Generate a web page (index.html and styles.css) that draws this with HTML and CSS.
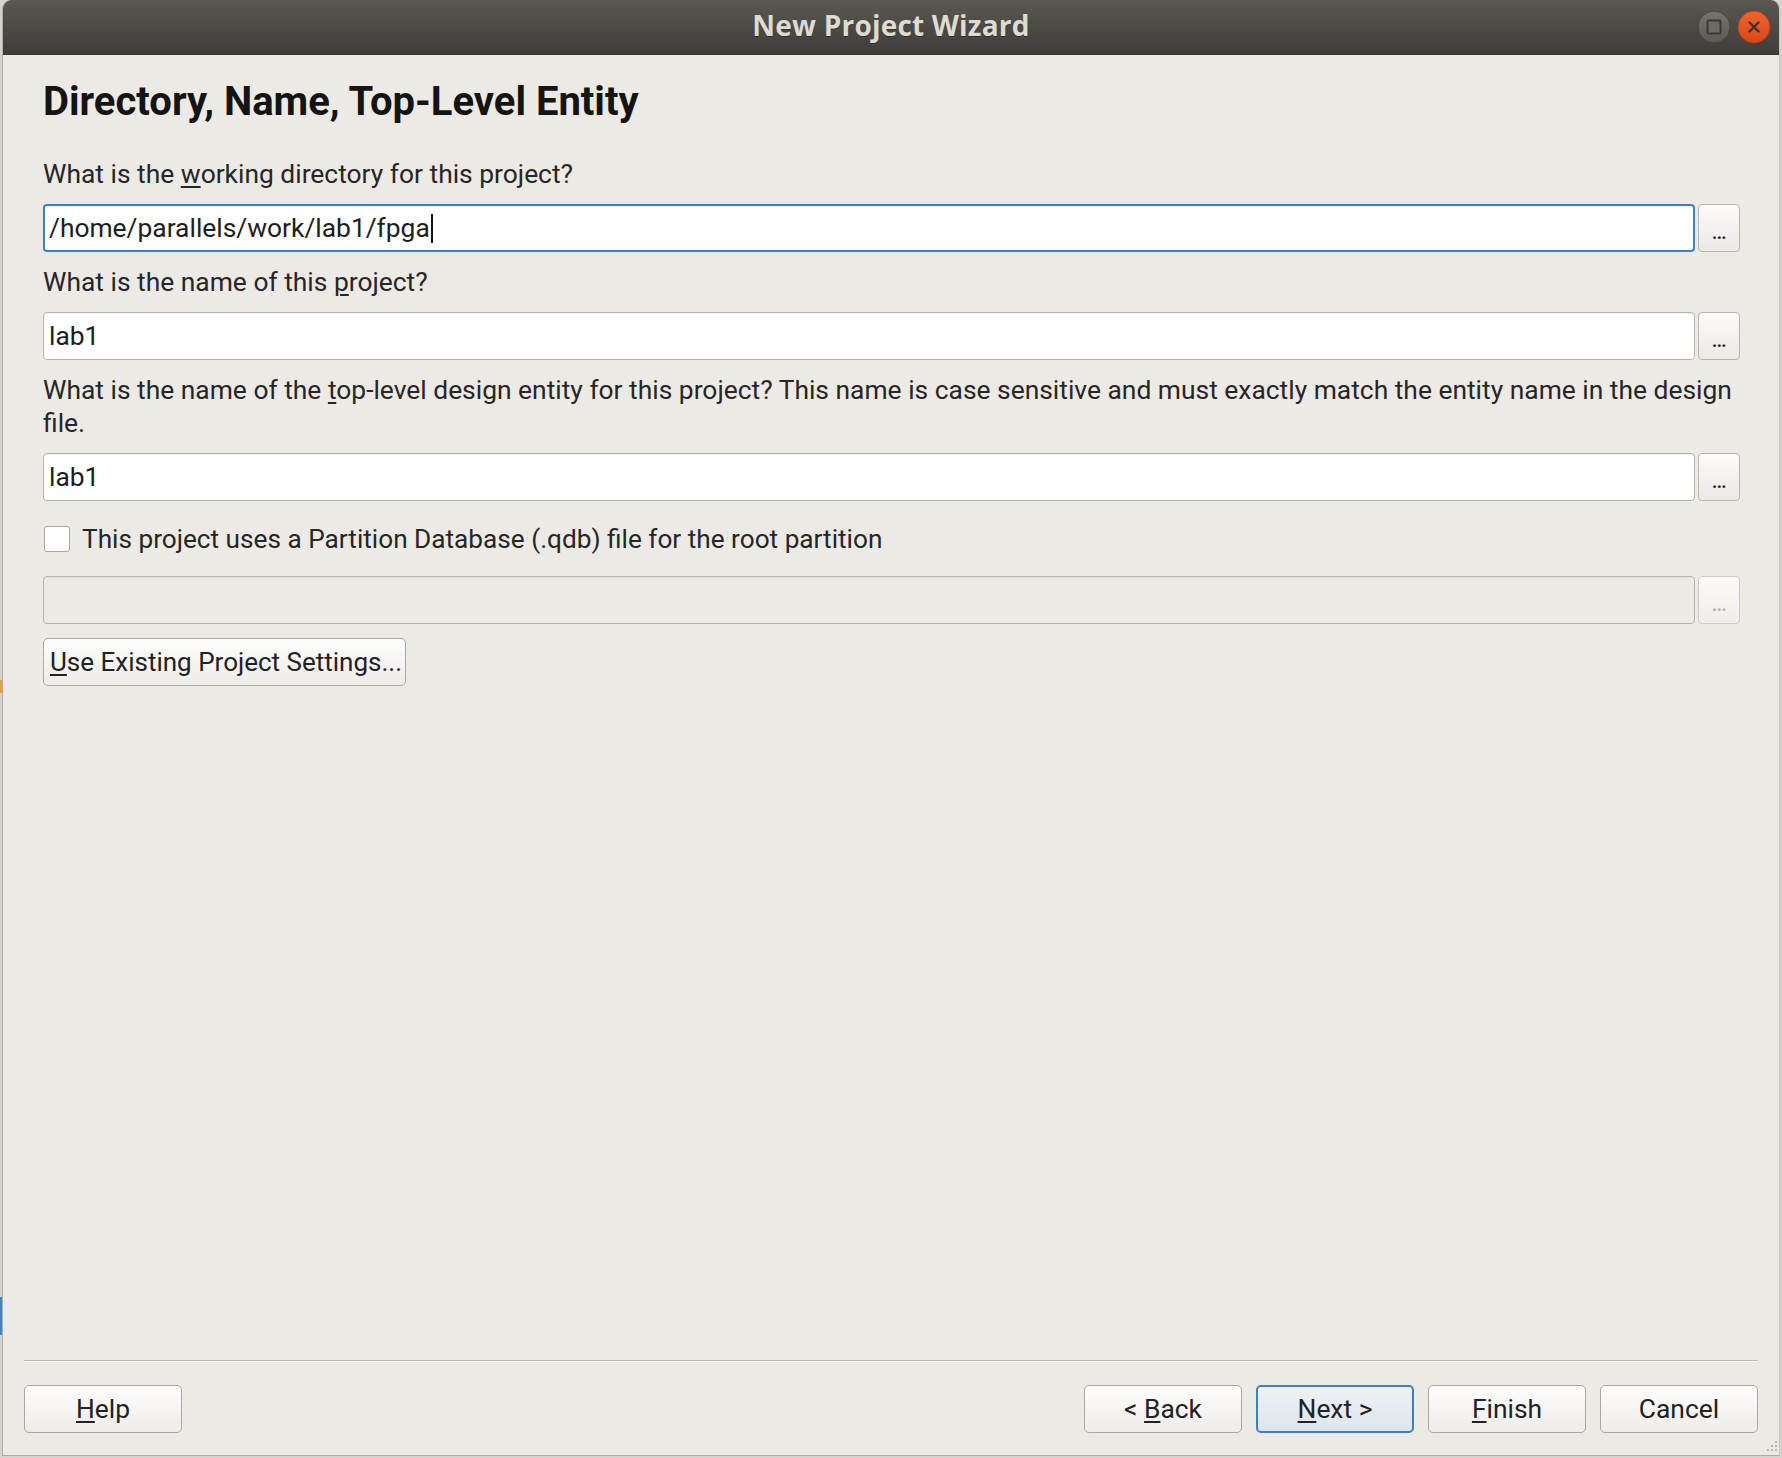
FILE: index.html
```html
<!DOCTYPE html>
<html lang="en">
<head>
<meta charset="utf-8">
<title>New Project Wizard</title>
<link rel="stylesheet" href="styles.css">
</head>
<body>
<div class="screen">
  <div class="edge">
    <div class="edge-seg seg-a"></div>
    <div class="edge-seg seg-orange"></div>
    <div class="edge-seg seg-b"></div>
    <div class="edge-seg seg-blue"></div>
    <div class="edge-seg seg-c"></div>
  </div>
  <div class="window">
    <div class="titlebar">
      <div class="title">New Project Wizard</div>
      <div class="wm-buttons">
        <svg class="wm" width="34" height="34" viewBox="0 0 34 34">
          <defs>
            <linearGradient id="gmax" x1="0" y1="0" x2="0" y2="1">
              <stop offset="0" stop-color="#77746f"/>
              <stop offset="1" stop-color="#5d5a55"/>
            </linearGradient>
          </defs>
          <circle cx="17" cy="17" r="16" fill="url(#gmax)" stroke="#45433f" stroke-width="1"/>
          <rect x="10.5" y="10.5" width="13" height="13" rx="1" fill="#6d6a65" stroke="#393834" stroke-width="2"/>
        </svg>
        <svg class="wm" width="34" height="34" viewBox="0 0 34 34">
          <defs>
            <linearGradient id="gclose" x1="0" y1="0" x2="0" y2="1">
              <stop offset="0" stop-color="#f0642f"/>
              <stop offset="1" stop-color="#d8461b"/>
            </linearGradient>
          </defs>
          <circle cx="17" cy="17" r="16" fill="url(#gclose)" stroke="#b03e16" stroke-width="1"/>
          <path d="M12.5 12.5 L21.5 21.5 M21.5 12.5 L12.5 21.5" stroke="#3a2f2a" stroke-width="2.3" stroke-linecap="round"/>
        </svg>
      </div>
    </div>

    <div class="body">
      <div class="content">
        <h1 class="heading">Directory, Name, Top-Level Entity</h1>

        <div class="label">What is the <u>w</u>orking directory for this project?</div>
        <div class="row">
          <div class="input focused">/home/parallels/work/lab1/fpga<span class="caret"></span></div>
          <button class="browse">...</button>
        </div>

        <div class="label">What is the name of this <u>p</u>roject?</div>
        <div class="row">
          <div class="input">lab1</div>
          <button class="browse">...</button>
        </div>

        <div class="label">What is the name of the <u>t</u>op-level design entity for this project? This name is case sensitive and must exactly match the entity name in the design file.</div>
        <div class="row">
          <div class="input">lab1</div>
          <button class="browse">...</button>
        </div>

        <div class="check-row">
          <span class="checkbox"></span>
          <span class="check-label">This project uses a Partition Database (.qdb) file for the root partition</span>
        </div>

        <div class="row">
          <div class="input disabled"></div>
          <button class="browse disabled">...</button>
        </div>

        <div class="row-left">
          <button class="btn btn-auto"><u>U</u>se Existing Project Settings...</button>
        </div>
      </div>

      <div class="footer">
        <div class="separator"></div>
        <div class="button-bar">
          <button class="btn"><u>H</u>elp</button>
          <div class="button-group">
            <button class="btn">&lt; <u>B</u>ack</button>
            <button class="btn btn-default"><u>N</u>ext &gt;</button>
            <button class="btn"><u>F</u>inish</button>
            <button class="btn">Cancel</button>
          </div>
        </div>
      </div>

      <svg class="grip" width="14" height="14" viewBox="0 0 14 14">
        <g fill="#b4b0aa">
          <rect x="11" y="1" width="2" height="2"/>
          <rect x="7" y="5" width="2" height="2"/>
          <rect x="11" y="5" width="2" height="2"/>
          <rect x="3" y="9" width="2" height="2"/>
          <rect x="7" y="9" width="2" height="2"/>
          <rect x="11" y="9" width="2" height="2"/>
        </g>
      </svg>
    </div>
  </div>
</div>
</body>
</html>
```

FILE: styles.css
```css
* {
  box-sizing: border-box;
}

html, body {
  margin: 0;
  padding: 0;
}

body {
  width: 1782px;
  height: 1458px;
  overflow: hidden;
  background: #d6d3ce;
  font-family: Roboto, "Liberation Sans", sans-serif;
  color: #262626;
}

.screen {
  display: flex;
  height: 1458px;
}

/* sliver of whatever lies behind the dialog */
.edge {
  width: 2px;
  display: flex;
  flex-direction: column;
}
.edge-seg { background: #d6d3ce; }
.seg-a { height: 680px; }
.seg-orange { height: 13px; background: #e8a22a; }
.seg-b { height: 604px; }
.seg-blue { height: 38px; background: #3d85c6; }
.seg-c { flex: 1; }

.window {
  width: 1778px;
  height: 1456px;
  display: flex;
  flex-direction: column;
  background: #edeae6;
  border-left: 1px solid #aeaaa4;
  border-right: 1px solid #c9c5bf;
  border-bottom: 1px solid #aeaaa4;
  border-radius: 9px 9px 0 0;
  overflow: hidden;
}

.titlebar {
  height: 55px;
  flex: none;
  display: grid;
  grid-template-columns: 1fr auto 1fr;
  align-items: center;
  background: linear-gradient(#5b5852, #3e3d39);
  border-bottom: 1px solid #34332f;
  padding: 0 8px 2px 8px;
}

.title {
  grid-column: 2;
  font-family: "Open Sans", "DejaVu Sans", sans-serif;
  font-weight: 700;
  font-size: 28px;
  color: #dfdbd2;
  text-shadow: 0 1px 0 rgba(0, 0, 0, 0.35);
  letter-spacing: 0.2px;
  padding-bottom: 3px;
}

.wm-buttons {
  grid-column: 3;
  justify-self: end;
  display: flex;
  gap: 6px;
  padding-top: 1px;
}

.wm {
  display: block;
}

.body {
  flex: 1;
  display: flex;
  flex-direction: column;
  position: relative;
}

.content {
  flex: 1;
  display: flex;
  flex-direction: column;
  gap: 13.5px;
  padding: 24px 39px 0 40px;
}

.heading {
  margin: 0 0 19px 0;
  font-size: 40px;
  line-height: 46px;
  font-weight: 700;
  color: #141414;
}

.label {
  font-size: 26.4px;
  line-height: 33px;
  color: #262626;
}

u {
  text-decoration-thickness: 2px;
  text-underline-offset: 3px;
}

.row {
  display: flex;
  gap: 3px;
  height: 48px;
}

.row-left {
  display: flex;
}

.input {
  flex: 1;
  display: flex;
  align-items: center;
  height: 48px;
  padding: 0 5px;
  background: #ffffff;
  border: 1px solid #b7b3ac;
  border-radius: 4px;
  box-shadow: inset 0 1px 1px rgba(0, 0, 0, 0.06);
  font-size: 26.4px;
  color: #1e1e1e;
}

.input.focused {
  border: 2px solid #3f80c2;
  padding: 0 4px;
}

.input.disabled {
  background: #edeae6;
  border-color: #b9b5ae;
}

.caret {
  display: inline-block;
  width: 2px;
  height: 29px;
  margin-left: 1px;
  background: #111;
}

button {
  font-family: inherit;
  margin: 0;
}

.browse {
  width: 42px;
  height: 48px;
  flex: none;
  padding: 0 0 3px 0;
  border: 1px solid #b9b5ae;
  border-radius: 4px;
  background: linear-gradient(#fcfbfa, #ebe9e6);
  font-size: 18px;
  font-weight: 700;
  letter-spacing: -0.5px;
  color: #222;
  display: flex;
  align-items: flex-end;
  justify-content: center;
  line-height: 30px;
}

.browse.disabled {
  color: #b2aea8;
  border-color: #cfcbc5;
  background: linear-gradient(#fbfaf9, #f0eeeb);
}

.check-row {
  display: flex;
  align-items: center;
  gap: 12px;
  height: 33px;
  margin: 8px 0 7px 1px;
}

.checkbox {
  width: 26px;
  height: 26px;
  flex: none;
  background: #ffffff;
  border: 1px solid #aaa6a0;
  border-radius: 3px;
}

.check-label {
  font-size: 26.2px;
  line-height: 33px;
  color: #262626;
}

.btn {
  height: 48px;
  width: 158px;
  border: 1px solid #aca8a1;
  border-radius: 5px;
  background: linear-gradient(#fdfdfc, #eeece9);
  font-size: 26.4px;
  color: #222;
  padding: 0;
}

.btn-auto {
  width: auto;
  padding: 0 3px 0 6px;
  font-size: 26px;
}

.btn-default {
  border: 2px solid #3d7fc1;
  background: linear-gradient(#eef2f6, #dde5ec);
}

.footer {
  flex: none;
  padding: 0 21px 22px 21px;
}

.separator {
  height: 2px;
  border-top: 1px solid #bdb9b3;
  border-bottom: 1px solid #fbfaf8;
}

.button-bar {
  display: flex;
  justify-content: space-between;
  margin-top: 23px;
}

.button-group {
  display: flex;
  gap: 14px;
}

.grip {
  position: absolute;
  right: 1px;
  bottom: 1px;
}
```
